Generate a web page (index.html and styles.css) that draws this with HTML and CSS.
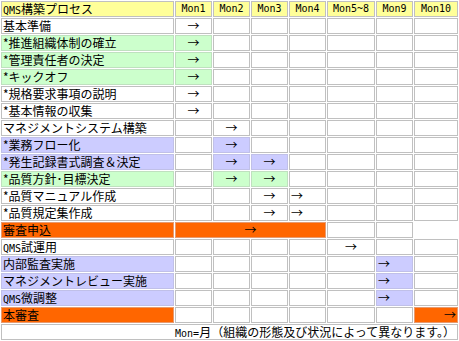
FILE: index.html
```html
<!DOCTYPE html>
<html lang="ja">
<head>
<meta charset="utf-8">
<title>QMS構築プロセス</title>
<link rel="stylesheet" href="styles.css">
</head>
<body>
<table class="plan">
  <thead>
    <tr>
      <th class="y name w0"><span class="en">QMS</span>構築プロセス</th>
      <th class="y mon w1">Mon1</th>
      <th class="y mon w1">Mon2</th>
      <th class="y mon w1">Mon3</th>
      <th class="y mon w1">Mon4</th>
      <th class="y mon w5">Mon5~8</th>
      <th class="y mon w1">Mon9</th>
      <th class="y mon w7">Mon10</th>
    </tr>
  </thead>
  <tbody>
    <tr><td class="name">基本準備</td><td class="c">→</td><td></td><td></td><td></td><td></td><td></td><td></td></tr>
    <tr><td class="name g">*推進組織体制の確立</td><td class="c g">→</td><td></td><td></td><td></td><td></td><td></td><td></td></tr>
    <tr><td class="name g">*管理責任者の決定</td><td class="c g">→</td><td></td><td></td><td></td><td></td><td></td><td></td></tr>
    <tr><td class="name g">*キックオフ</td><td class="c g">→</td><td></td><td></td><td></td><td></td><td></td><td></td></tr>
    <tr><td class="name">*規格要求事項の説明</td><td class="c">→</td><td></td><td></td><td></td><td></td><td></td><td></td></tr>
    <tr><td class="name">*基本情報の収集</td><td class="c">→</td><td></td><td></td><td></td><td></td><td></td><td></td></tr>
    <tr><td class="name">マネジメントシステム構築</td><td></td><td class="c">→</td><td></td><td></td><td></td><td></td><td></td></tr>
    <tr><td class="name b">*業務フロー化</td><td></td><td class="c b">→</td><td></td><td></td><td></td><td></td><td></td></tr>
    <tr><td class="name b">*発生記録書式調査＆決定</td><td></td><td class="c b">→</td><td class="c b">→</td><td></td><td></td><td></td><td></td></tr>
    <tr><td class="name g">*品質方針･目標決定</td><td></td><td class="c g">→</td><td class="c g">→</td><td></td><td></td><td></td><td></td></tr>
    <tr><td class="name">*品質マニュアル作成</td><td></td><td></td><td class="c">→</td><td class="l">→</td><td></td><td></td><td></td></tr>
    <tr><td class="name">*品質規定集作成</td><td></td><td></td><td class="c">→</td><td class="l">→</td><td></td><td></td><td></td></tr>
    <tr><td class="name o">審査申込</td><td class="c o" colspan="4">→</td><td></td><td></td></tr>
    <tr><td class="name"><span class="en">QMS</span>試運用</td><td></td><td></td><td></td><td></td><td class="c">→</td><td></td><td></td></tr>
    <tr><td class="name b">内部監査実施</td><td></td><td></td><td></td><td></td><td></td><td class="l b">→</td><td></td></tr>
    <tr><td class="name b">マネジメントレビュー実施</td><td></td><td></td><td></td><td></td><td></td><td class="l b">→</td><td></td></tr>
    <tr><td class="name b"><span class="en">QMS</span>微調整</td><td></td><td></td><td></td><td></td><td></td><td class="l b">→</td><td></td></tr>
    <tr><td class="name o">本審査</td><td></td><td></td><td></td><td></td><td></td><td></td><td class="r o">→</td></tr>
    <tr><td class="note" colspan="8"><span class="en">Mon=</span>月（組織の形態及び状況によって異なります。）</td></tr>
  </tbody>
</table>
</body>
</html>
```
FILE: styles.css
```css
html, body {
  margin: 0;
  padding: 0;
  background: #ffffff;
}

body {
  font-family: "Noto Sans CJK JP", "DejaVu Sans", sans-serif;
  font-size: 12px;
  color: #000000;
}

.plan {
  table-layout: fixed;
  width: 459px;
  border-collapse: separate;
  border-spacing: 1px;
  background: #ffffff;
}

.plan th,
.plan td {
  box-sizing: border-box;
  height: 16px;
  max-height: 16px;
  padding: 0 1px;
  border: 1px solid #c0c0c0;
  line-height: 14px;
  font-weight: normal;
  text-align: center;
  vertical-align: middle;
  white-space: nowrap;
  overflow: hidden;
  background: #ffffff;
}

.w0 { width: 173px; }
.w1 { width: 37px; }
.w5 { width: 48px; }
.w7 { width: 44px; }

.en {
  font-family: "DejaVu Sans Mono", monospace;
  font-size: 10px;
  line-height: 0;
}

.plan .mon {
  font-family: "DejaVu Sans Mono", monospace;
  font-size: 10px;
  line-height: 14px;
}

.plan .name {
  text-align: left;
}

.plan .c { text-align: center; }
.plan .l { text-align: left; }
.plan .r { text-align: right; }

.plan .y {
  background: #ffff99;
}

.plan .g {
  background: #ccffcc;
  border-color: #bfe0bf;
}

.plan .b {
  background: #ccccff;
  border-color: #c0c0e8;
}

.plan .o {
  background: #ff6600;
  border-color: #e69a70;
}

.plan .note {
  text-align: right;
  padding-right: 2px;
}
```
